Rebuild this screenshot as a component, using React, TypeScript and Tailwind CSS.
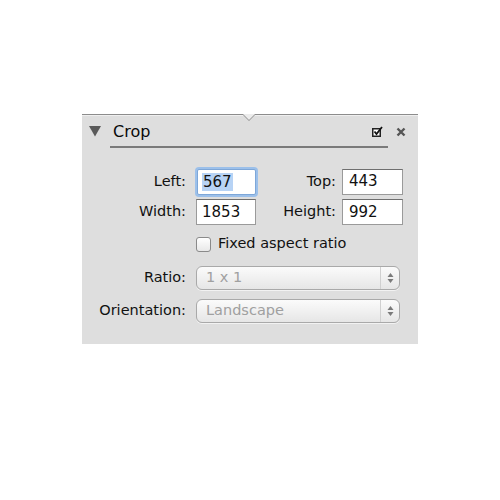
import React from "react";

const font = { fontFamily: '"DejaVu Sans", "Liberation Sans", sans-serif' };

function Select({ value }: { value: string }) {
  return (
    <div className="ml-[10px] w-[204px] h-[24px] rounded-[6px] border border-[#a9a9a9] bg-gradient-to-b from-[#fbfbfb] to-[#e6e6e6] flex items-center shadow-[0_1px_0_rgba(255,255,255,0.6)]">
      <span className="pl-[9px] flex-1 text-[14.5px] text-[#a0a0a0]">{value}</span>
      <div className="w-[1px] h-[22px] bg-[#d0d0d0]" />
      <div className="w-[18px] flex justify-center">
        <svg width="7" height="12" viewBox="0 0 7 12">
          <polygon points="3.5,1 6.5,5 0.5,5" fill="#7a7a7a" />
          <polygon points="0.5,7 6.5,7 3.5,11" fill="#7a7a7a" />
        </svg>
      </div>
    </div>
  );
}

export default function App() {
  return (
    <div className="w-[500px] h-[500px] bg-white pt-[114px] pl-[82px]" style={font}>
      <div className="relative w-[336px] h-[230px] bg-[#dedede] border-t border-[#8c8c8c]">
        <div className="absolute left-[160px] -top-[1px] w-0 h-0 border-l-[7px] border-r-[7px] border-t-[7px] border-l-transparent border-r-transparent border-t-[#8c8c8c]" />
        <div className="absolute left-[161px] -top-[1px] w-0 h-0 border-l-[6px] border-r-[6px] border-t-[6px] border-l-transparent border-r-transparent border-t-[#ececec]" />
        <div className="h-[1px] bg-[#efefef]" />
        <div className="h-[30px] flex items-center pl-[7px] pr-[12px]">
          <svg width="12" height="12" viewBox="0 0 12 12">
            <polygon points="0,1 12,1 6,11.5" fill="#5a5a5a" />
          </svg>
          <span className="ml-[12px] text-[16px] text-[#0a0a0a] mt-[2px]">Crop</span>
          <div className="flex-1" />
          <svg width="11" height="11" viewBox="0 0 11 11" className="mt-[1px]">
            <rect x="0.75" y="2.75" width="7.5" height="7.5" fill="white" stroke="#222" strokeWidth="1.5" />
            <path d="M2.5 5.5 L4.5 8 L10 1" fill="none" stroke="#111" strokeWidth="1.8" />
          </svg>
          <svg width="10" height="10" viewBox="0 0 10 10" className="ml-[13px] mt-[1px]">
            <path d="M1.5 1.5 L8.5 8.5 M8.5 1.5 L1.5 8.5" stroke="#555" strokeWidth="2.4" />
          </svg>
        </div>
        <div className="ml-[28px] w-[278px] h-[2px] bg-[#7a7a7a]" />

        <div className="mt-[20px] flex flex-col text-[14.5px] text-[#111]">
          <div className="flex items-center h-[27px]">
            <div className="w-[104px] text-right">Left:</div>
            <div className="ml-[11px] w-[59px] h-[26px] bg-white border border-[#7ea7d8] rounded-[2px] shadow-[0_0_0_2px_#9cc0ea] flex items-center pl-[4px]">
              <span className="bg-[#b7d3f5] text-[15px] leading-[18px] px-[1px]">567</span>
            </div>
            <div className="w-[80px] text-right">Top:</div>
            <div className="ml-[6px] w-[61px] h-[26px] bg-white border border-[#9a9a9a] border-t-[#6f6f6f] flex items-center pl-[6px] text-[15px]">443</div>
          </div>
          <div className="flex items-center h-[26px] mt-[4px]">
            <div className="w-[104px] text-right">Width:</div>
            <div className="ml-[10px] w-[60px] h-[26px] bg-white border border-[#9a9a9a] border-t-[#6f6f6f] flex items-center pl-[5px] text-[15px]">1853</div>
            <div className="w-[80px] text-right">Height:</div>
            <div className="ml-[6px] w-[61px] h-[26px] bg-white border border-[#9a9a9a] border-t-[#6f6f6f] flex items-center pl-[6px] text-[15px]">992</div>
          </div>
          <div className="flex items-center h-[16px] mt-[11px]">
            <div className="ml-[114px] w-[15px] h-[15px] rounded-[3px] border border-[#8a8a8a] bg-gradient-to-b from-white to-[#e8e8e8]" />
            <span className="ml-[7px]">Fixed aspect ratio</span>
          </div>
          <div className="flex items-center mt-[14px]">
            <div className="w-[104px] text-right">Ratio:</div>
            <Select value="1 x 1" />
          </div>
          <div className="flex items-center mt-[9px]">
            <div className="w-[104px] text-right">Orientation:</div>
            <Select value="Landscape" />
          </div>
        </div>
      </div>
    </div>
  );
}
